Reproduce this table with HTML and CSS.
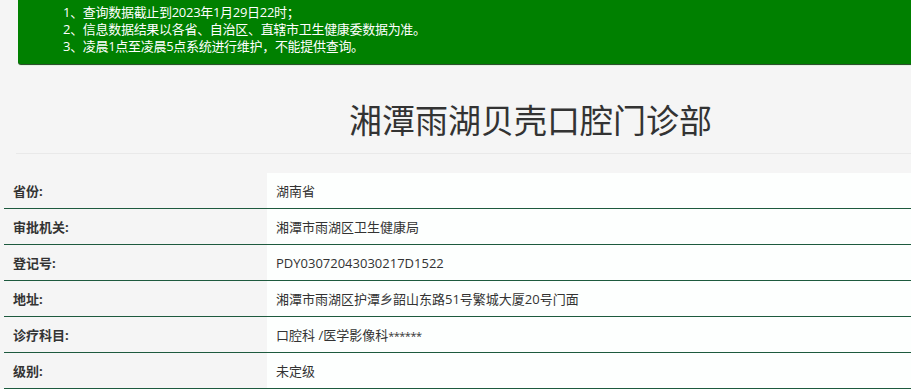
FILE: index.html
```html
<!DOCTYPE html>
<html lang="zh-CN">
<head>
<meta charset="utf-8">
<title>湘潭雨湖贝壳口腔门诊部</title>
<link rel="stylesheet" href="styles.css">
</head>
<body>
<div class="page">
  <div class="notice">
    <ul class="notice-list">
      <li>1、查询数据截止到2023年1月29日22时；</li>
      <li>2、信息数据结果以各省、自治区、直辖市卫生健康委数据为准。</li>
      <li>3、凌晨1点至凌晨5点系统进行维护，不能提供查询。</li>
    </ul>
  </div>
  <h1 class="title">湘潭雨湖贝壳口腔门诊部</h1>
  <table class="info">
    <tr><th>省份:</th><td>湖南省</td></tr>
    <tr><th>审批机关:</th><td>湘潭市雨湖区卫生健康局</td></tr>
    <tr><th>登记号:</th><td>PDY03072043030217D1522</td></tr>
    <tr><th>地址:</th><td>湘潭市雨湖区护潭乡韶山东路51号繁城大厦20号门面</td></tr>
    <tr><th>诊疗科目:</th><td>口腔科 /医学影像科<span class="stars">******</span></td></tr>
    <tr><th>级别:</th><td>未定级</td></tr>
  </table>
</div>
</body>
</html>
```

FILE: styles.css
```css
html, body {
  margin: 0;
  padding: 0;
  overflow: hidden;
  background: #f5f5f5;
}
body {
  font-family: "Open Sans", "Noto Sans CJK SC", sans-serif;
  color: #333;
}
.page {
  width: 911px;
}
.notice {
  margin-left: 18px;
  height: 64px;
  box-sizing: border-box;
  background: #008000;
  border-bottom-left-radius: 3px;
  box-shadow: 0 1px 0 #2f4f2f, 0 2px 0 #dff5df;
  padding: 4px 0 0 45px;
}
.notice-list {
  list-style: none;
  margin: 0;
  padding: 0;
  color: #fff;
  font-size: 13px;
  line-height: 17px;
  letter-spacing: -0.3px;
}
.title {
  margin: 37px 0 0 16px;
  padding: 0 0 12px 134px;
  text-align: center;
  font-size: 33px;
  font-weight: normal;
  line-height: 40px;
  border-bottom: 1px solid #e9e9e9;
  color: #333;
}
.info {
  margin: 19px 0 0 4px;
  width: 907px;
  border-collapse: collapse;
  font-size: 13px;
}
.info th, .info td {
  height: 35px;
  padding: 0 9px;
  border-bottom: 1px solid #1d5a3e;
  vertical-align: middle;
  text-align: left;
}
.info th {
  width: 245px;
  font-weight: bold;
  color: #333;
}
.info td {
  background: #fdfffe;
  color: #333;
}
.stars {
  font-size: 11px;
  letter-spacing: -0.5px;
}
```
